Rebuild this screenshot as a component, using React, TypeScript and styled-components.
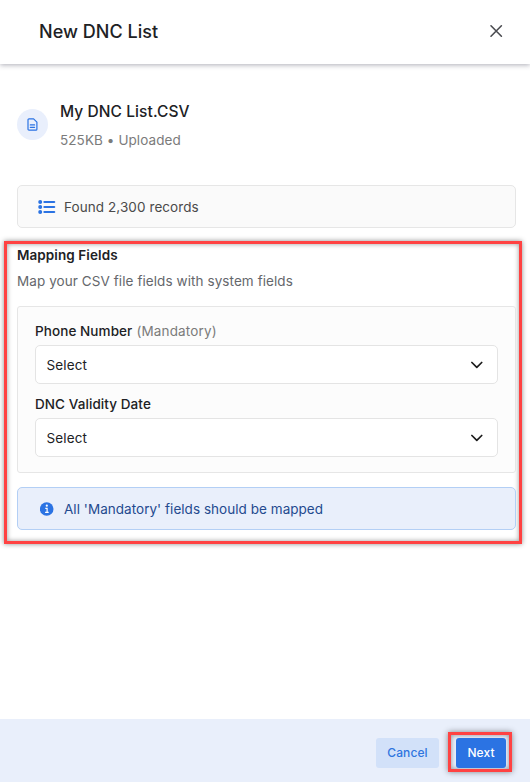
import React from "react";
import styled, { createGlobalStyle } from "styled-components";

const GlobalStyle = createGlobalStyle`
  * { box-sizing: border-box; }
  body { margin: 0; background: #fff; font-family: Inter, "Liberation Sans", sans-serif; }
`;

const Dialog = styled.div`
  width: 530px;
  height: 782px;
  display: flex;
  flex-direction: column;
  background: #fff;
  overflow: hidden;
`;

const Header = styled.header`
  height: 64px;
  flex: none;
  display: flex;
  align-items: center;
  justify-content: space-between;
  padding: 0 27px 1px 39px;
  box-shadow: 0 1px 5px rgba(60, 60, 80, 0.42);
`;

const Text = styled.span<{ $size?: number; $weight?: number; $color?: string; $spacing?: number; $line?: number }>`
  font-size: ${(p) => p.$size ?? 13.5}px;
  font-weight: ${(p) => p.$weight ?? 400};
  color: ${(p) => p.$color ?? "#202124"};
  letter-spacing: ${(p) => p.$spacing ?? 0.08}px;
  line-height: ${(p) => p.$line ?? 20}px;
  white-space: nowrap;
`;

const IconButton = styled.button`
  width: 14px;
  height: 14px;
  padding: 0;
  border: 0;
  background: none;
  display: flex;
  margin-bottom: 2px;
`;

const Body = styled.main`
  flex: 1;
  padding: 36px 14px 0 17px;
`;

const FileRow = styled.div`
  display: flex;
  gap: 12px;
  height: 85px;
`;

const FileBadge = styled.div`
  width: 31px;
  height: 31px;
  margin-top: 9px;
  border-radius: 50%;
  background: #e9effc;
  display: flex;
  align-items: center;
  justify-content: center;
`;

const FileMeta = styled.div`
  display: flex;
  flex-direction: column;
  gap: 6px;
`;

const Banner = styled.div<{ $info?: boolean }>`
  height: 43px;
  flex: none;
  border-radius: 5px;
  border: 1px solid ${(p) => (p.$info ? "#b3cff5" : "#e6e6e6")};
  background: ${(p) => (p.$info ? "#e9effb" : "#fafafa")};
  display: flex;
  align-items: center;
  padding-left: 20px;
`;

const BannerIcon = styled.span`
  width: 18px;
  margin-right: 8px;
  display: flex;
  justify-content: center;
`;

const Highlight = styled.section`
  margin: 13px -5px 0 -13px;
  width: 518px;
  height: 303px;
  border: 3px solid #ff4242;
  padding: 1px 3px 0 10px;
  box-shadow: 0 0 5px rgba(0, 0, 0, 0.45), inset 0 0 5px rgba(0, 0, 0, 0.4);
  display: flex;
  flex-direction: column;
`;

const Panel = styled.div`
  height: 167px;
  flex: none;
  margin: 8px 0 14px;
  border: 1px solid #e6e6e6;
  border-radius: 3px;
  background: #fcfcfc;
  padding: 14px 17px 0;
`;

const Label = styled.div`
  height: 20px;
  display: flex;
  gap: 4px;
  margin-bottom: 4px;
`;

const SelectBox = styled.div`
  height: 39px;
  border: 1px solid #e4e4e4;
  border-radius: 5px;
  background: #fff;
  display: flex;
  align-items: center;
  justify-content: space-between;
  padding: 0 14px 0 10.5px;
  margin-bottom: 10px;
`;

const Footer = styled.footer`
  height: 63px;
  flex: none;
  background: #e9effb;
  display: flex;
  justify-content: flex-end;
  align-items: flex-start;
  gap: 9px;
  padding: 13px 18px 0 0;
`;

const Button = styled.button<{ $primary?: boolean }>`
  width: ${(p) => (p.$primary ? 50 : 63)}px;
  height: 30px;
  padding: 0;
  border: 0;
  border-radius: 3px;
  background: ${(p) => (p.$primary ? "#2b73e3" : "#d2e1f9")};
  color: ${(p) => (p.$primary ? "#fff" : "#2f75df")};
  font: 450 12px/30px Inter, sans-serif;
  letter-spacing: 0.1px;
  margin-top: ${(p) => (p.$primary ? 0 : 6)}px;
`;

const ButtonHighlight = styled.div`
  width: 64px;
  height: 40px;
  border: 3px solid #ff4242;
  padding: 3px 3px 0 5px;
  box-shadow: 0 0 6px rgba(0, 0, 0, 0.45), inset 0 0 5px rgba(0, 0, 0, 0.4);
`;

const CloseIcon = () => (
  <svg width="14" height="14" viewBox="0 0 14 14" fill="none" stroke="#4a4b50" strokeWidth="1.6" strokeLinecap="round">
    <path d="M2 1.8 12.4 12.2M12.4 1.8 2 12.2" />
  </svg>
);

const FileIcon = () => (
  <svg width="11" height="13" viewBox="0 0 11 13" fill="none" stroke="#2b73e3" strokeWidth="1.2" strokeLinejoin="round" strokeLinecap="round">
    <path d="M2 .8h4.6l3.3 3.3v7.1a1 1 0 0 1-1 1H2a1 1 0 0 1-1-1V1.8a1 1 0 0 1 1-1z" />
    <path d="M3.3 6.9h4.3M3.3 9.3h4.3" />
  </svg>
);

const ListIcon = () => (
  <svg width="18" height="14" viewBox="0 0 18 14" fill="#2b73e3">
    <circle cx="2.2" cy="2" r="2" />
    <circle cx="2.2" cy="7" r="2" />
    <circle cx="2.2" cy="12" r="2" />
    <rect x="5.3" y=".9" width="12" height="2.2" rx="1.1" />
    <rect x="5.3" y="5.9" width="12" height="2.2" rx="1.1" />
    <rect x="5.3" y="10.9" width="12" height="2.2" rx="1.1" />
  </svg>
);

const InfoIcon = () => (
  <svg width="14" height="14" viewBox="0 0 14 14">
    <circle cx="6.7" cy="7" r="6.8" fill="#2b73e3" />
    <circle cx="6.8" cy="3.7" r="1.1" fill="#fff" />
    <path d="M5.3 6.4h1.8v3.8M5.1 10.4h3.6" stroke="#fff" strokeWidth="1.2" fill="none" />
  </svg>
);

const Chevron = () => (
  <svg width="12" height="8" viewBox="0 0 12 8" fill="none" stroke="#1b1b1b" strokeWidth="1.7" strokeLinecap="round" strokeLinejoin="round">
    <path d="M.9 1.5 5.8 6.3 10.7 1.5" />
  </svg>
);

const SelectField = ({ label, hint }: { label: string; hint?: string }) => (
  <>
    <Label>
      <Text $weight={500}>{label}</Text>
      {hint && <Text $color="#7b7b7b" $spacing={0.15}>{hint}</Text>}
    </Label>
    <SelectBox role="combobox">
      <Text $spacing={0.12}>Select</Text>
      <Chevron />
    </SelectBox>
  </>
);

export default function App() {
  return (
    <>
      <GlobalStyle />
      <Dialog>
        <Header>
          <Text as="h1" $size={18} $weight={500} $spacing={0.04}>New DNC List</Text>
          <IconButton aria-label="Close"><CloseIcon /></IconButton>
        </Header>
        <Body>
          <FileRow>
            <FileBadge><FileIcon /></FileBadge>
            <FileMeta>
              <Text $size={15.5} $weight={500} $line={24}>My DNC List.CSV</Text>
              <Text $color="#7b7b7b">525KB • Uploaded</Text>
            </FileMeta>
          </FileRow>
          <Banner>
            <BannerIcon><ListIcon /></BannerIcon>
            <Text $color="#4a4a4a">Found 2,300 records</Text>
          </Banner>
          <Highlight>
            <Text $weight={600}>Mapping Fields</Text>
            <Text $color="#65676c" $line={33}>Map your CSV file fields with system fields</Text>
            <Panel>
              <SelectField label="Phone Number" hint="(Mandatory)" />
              <SelectField label="DNC Validity Date" />
            </Panel>
            <Banner $info>
              <BannerIcon><InfoIcon /></BannerIcon>
              <Text $color="#244a8f" $spacing={0.04}>All 'Mandatory' fields should be mapped</Text>
            </Banner>
          </Highlight>
        </Body>
        <Footer>
          <Button>Cancel</Button>
          <ButtonHighlight><Button $primary>Next</Button></ButtonHighlight>
        </Footer>
      </Dialog>
    </>
  );
}
